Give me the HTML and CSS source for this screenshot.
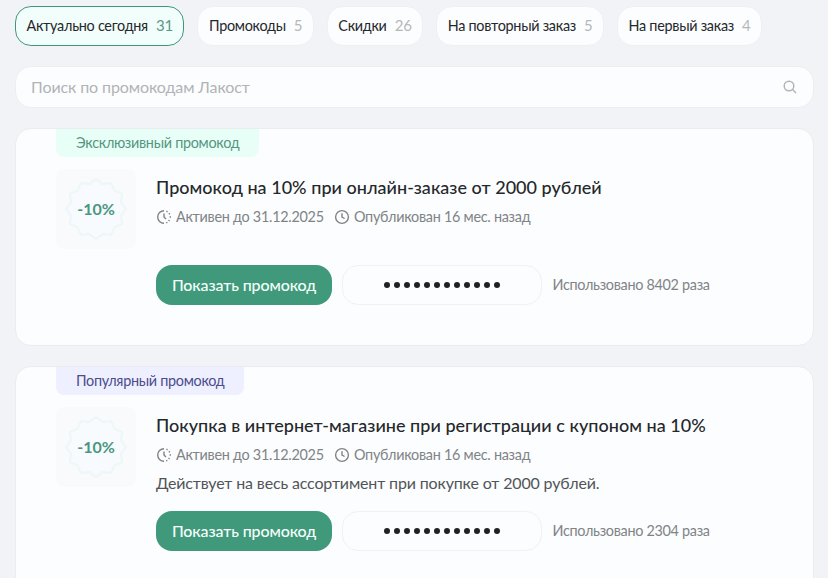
FILE: index.html
```html
<!DOCTYPE html>
<html lang="ru">

<head>
  <meta charset="utf-8">
  <title>Промокоды Лакост</title>
  <link rel="stylesheet" href="styles.css">
</head>

<body>
  <svg class="sprite">
    <symbol id="search" viewBox="0 0 16 16"><circle cx="7" cy="7" r="4.8"/><path d="M10.6 10.6L14 14"/></symbol>
    <symbol id="active" viewBox="0 0 16 16"><path d="M8 1.7a6.3 6.3 0 0 0 0 12.6M8 4.6V8l2 2"/><path d="M10.4 2.2l1.2.6M13 4.2l.7 1.1M13.6 8h1.4M13.4 11l-.7 1.1M11.4 13.3l-1.2.5"/></symbol>
    <symbol id="clock" viewBox="0 0 16 16"><circle cx="8" cy="8" r="6.4"/><path d="M8 4.2V8l2.6 1.5"/></symbol>
    <symbol id="seal" viewBox="0 0 80 80"><path d="M40 10L46.7 14.9L55 14L58.4 21.6L66 25L65.1 33.3L70 40L65.1 46.7L66 55L58.4 58.4L55 66L46.7 65.1L40 70L33.3 65.1L25 66L21.6 58.4L14 55L14.9 46.7L10 40L14.9 33.3L14 25L21.6 21.6L25 14L33.3 14.9Z"/></symbol>
  </svg>
  <main class="page">
    <nav class="filters">
      <a class="filter active">Актуально сегодня <span class="count">31</span></a>
      <a class="filter">Промокоды <span class="count">5</span></a>
      <a class="filter">Скидки <span class="count">26</span></a>
      <a class="filter">На повторный заказ <span class="count">5</span></a>
      <a class="filter">На первый заказ <span class="count">4</span></a>
    </nav>
    <div class="search">
      <span>Поиск по промокодам Лакост</span>
      <svg class="icon"><use href="#search"/></svg>
    </div>

    <article class="card">
      <div class="label exclusive">Эксклюзивный промокод</div>
      <div class="content">
        <div class="discount"><svg class="seal"><use href="#seal"/></svg><span>-10%</span></div>
        <div class="info">
          <h2>Промокод на 10% при онлайн-заказе от 2000 рублей</h2>
          <div class="meta">
            <svg class="icon"><use href="#active"/></svg><span class="until">Активен до 31.12.2025</span>
            <svg class="icon"><use href="#clock"/></svg><span class="published">Опубликован 16 мес. назад</span>
          </div>
          <p class="text"></p>
          <div class="actions">
            <button class="button">Показать промокод</button>
            <div class="code"><i></i><i></i><i></i><i></i><i></i><i></i><i></i><i></i><i></i><i></i><i></i><i></i></div>
            <span class="used">Использовано 8402 раза</span>
          </div>
        </div>
      </div>
    </article>

    <article class="card">
      <div class="label popular">Популярный промокод</div>
      <div class="content">
        <div class="discount"><svg class="seal"><use href="#seal"/></svg><span>-10%</span></div>
        <div class="info">
          <h2>Покупка в интернет-магазине при регистрации с купоном на 10%</h2>
          <div class="meta">
            <svg class="icon"><use href="#active"/></svg><span class="until">Активен до 31.12.2025</span>
            <svg class="icon"><use href="#clock"/></svg><span class="published">Опубликован 16 мес. назад</span>
          </div>
          <p class="text filled">Действует на весь ассортимент при покупке от 2000 рублей.</p>
          <div class="actions">
            <button class="button">Показать промокод</button>
            <div class="code"><i></i><i></i><i></i><i></i><i></i><i></i><i></i><i></i><i></i><i></i><i></i><i></i></div>
            <span class="used">Использовано 2304 раза</span>
          </div>
        </div>
      </div>
    </article>
  </main>
</body>

</html>
```
FILE: styles.css
```css
* {
  box-sizing: border-box;
}

body {
  margin: 0;
  height: 578px;
  overflow: hidden;
  background: #f2f3f7;
  color: #25282b;
  font-family: Lato, sans-serif;
}

.sprite {
  display: none;
}

.page {
  padding: 6px 14px 0 15px;
}

.filters {
  display: flex;
  gap: 13px;
}

.filter {
  display: flex;
  align-items: center;
  justify-content: space-between;
  height: 40px;
  padding: 0 10.5px 2px;
  border: 1px solid #eef0f3;
  border-radius: 16px;
  background: #fcfdfe;
  font-size: 14.4px;
  letter-spacing: -0.27px;
  white-space: nowrap;
}

.filter.active {
  border-color: #43957c;
  background: #f2fefb;
}

.count {
  margin-left: 8px;
  color: #b4b8bb;
  font-size: 15px;
  letter-spacing: -0.2px;
}

.active .count {
  color: #5b9987;
}

.search {
  display: flex;
  align-items: center;
  justify-content: space-between;
  height: 42px;
  margin-top: 20px;
  padding: 0 15px 2px;
  border: 1px solid #eceef1;
  border-radius: 16px;
  background: #fcfdfe;
  color: #b0b4b7;
  font-size: 16px;
  letter-spacing: -0.1px;
}

.icon {
  flex: none;
  width: 16px;
  height: 16px;
  fill: none;
  stroke: currentColor;
  stroke-width: 1.4;
}

.search .icon {
  margin-top: 2px;
}

.card {
  height: 218px;
  margin-top: 20px;
  padding-left: 40px;
  border: 1px solid #eaecef;
  border-radius: 16px;
  background: #fcfdfe;
}

.card + .card {
  height: 240px;
}

.label {
  width: fit-content;
  height: 28px;
  padding: 0 20px;
  border-radius: 0 0 8px 8px;
  font-size: 14.4px;
  letter-spacing: -0.29px;
  line-height: 27px;
  white-space: nowrap;
}

.exclusive {
  background: #e8fff8;
  color: #559680;
}

.popular {
  background: #eeefff;
  color: #4b4d8c;
}

.content {
  display: flex;
  gap: 20px;
  padding-top: 12px;
}

.discount {
  display: grid;
  place-items: center;
  width: 80px;
  height: 80px;
  border-radius: 8px;
  background: #f8fafc;
  color: #4b967e;
  font-size: 16px;
  font-weight: bold;
}

.discount > * {
  grid-area: 1 / 1;
}

.discount span {
  padding-bottom: 2px;
}

.seal {
  width: 80px;
  height: 80px;
  fill: #f7fbfd;
  stroke: #edf6f8;
  stroke-width: 2;
  stroke-linejoin: round;
}

h2 {
  margin: 6px 0 0;
  font-size: 18px;
  font-weight: 500;
  letter-spacing: 0.02px;
  line-height: 24px;
  white-space: nowrap;
}

.meta {
  display: flex;
  align-items: center;
  height: 20px;
  margin-top: 8px;
  color: #808487;
  font-size: 14.4px;
  letter-spacing: -0.27px;
  white-space: nowrap;
}

.until {
  width: 158px;
  margin-left: 4px;
  padding-bottom: 2px;
}

.published {
  margin-left: 4px;
  padding-bottom: 2px;
}

.text {
  height: 24px;
  margin: 6px 0 0;
  color: #515558;
  font-size: 16px;
  letter-spacing: -0.15px;
  line-height: 24px;
  white-space: nowrap;
}

.actions {
  display: flex;
  align-items: center;
  margin-top: 8px;
}

.text.filled + .actions {
  margin-top: 16px;
}

.button {
  width: 176px;
  height: 40px;
  padding: 0 0 2px;
  border: 0;
  border-radius: 16px;
  background: #40997a;
  color: #f5fffb;
  font-family: inherit;
  font-size: 16px;
  font-weight: 500;
  letter-spacing: -0.12px;
}

.code {
  display: flex;
  align-items: center;
  justify-content: center;
  gap: 4px;
  width: 200px;
  height: 40px;
  margin: 0 10.5px 0 10px;
  border: 1px solid #eff1f4;
  border-radius: 16px;
}

.code i {
  width: 6px;
  height: 6px;
  border-radius: 50%;
  background: #1f2124;
}

.used {
  padding-bottom: 2px;
  color: #808487;
  font-size: 14.4px;
  letter-spacing: -0.3px;
  white-space: nowrap;
}
```
